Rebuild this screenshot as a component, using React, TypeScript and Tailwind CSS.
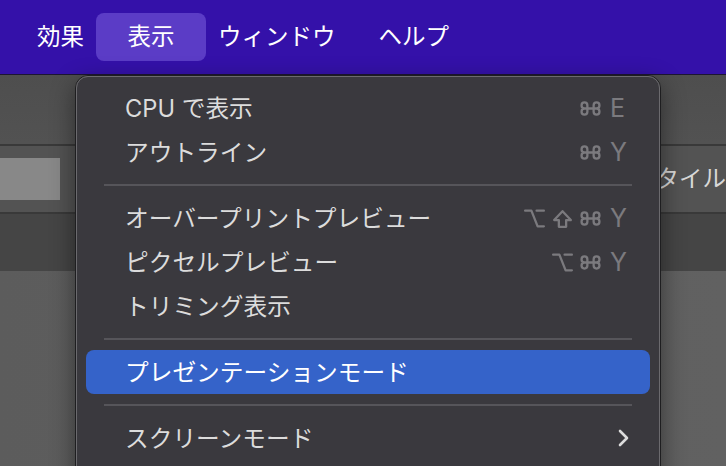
import React from "react";

const FONT = { fontFamily: 'Inter, "Noto Sans CJK JP", sans-serif' };

function Sym({ k }: { k: string }) {
  const common = {
    width: 25,
    height: 25,
    viewBox: "0 0 24 24",
    fill: "none",
    stroke: "#7b7a7e",
    strokeWidth: 2.2,
    strokeLinecap: "round" as const,
    strokeLinejoin: "round" as const,
  };
  if (k === "cmd")
    return (
      <svg {...common}>
        <path d="M15 9v6a2.8 2.8 0 1 0 2.8-2.8H6.2A2.8 2.8 0 1 0 9 15V9a2.8 2.8 0 1 0-2.8 2.8h11.6A2.8 2.8 0 1 0 15 9z" />
      </svg>
    );
  if (k === "opt")
    return (
      <svg {...common}>
        <path d="M3 4.5h6l6 15h6" />
        <path d="M14 4.5h7" />
      </svg>
    );
  if (k === "shift")
    return (
      <svg {...common}>
        <path d="M8.5 20v-6.5H4L12 5l8 8.5h-4.5V20h-7z" />
      </svg>
    );
  return (
    <span className="text-[25px] leading-none w-[16px] ml-[3px] text-left text-[#7b7a7e] pl-[1px]" style={FONT}>
      {k}
    </span>
  );
}

function Shortcut({ keys }: { keys: string[] }) {
  return (
    <div className="flex items-center gap-[3px]">
      {keys.map((k, i) => (
        <Sym key={i} k={k} />
      ))}
    </div>
  );
}

function Row({ label, keys, active, sub }: { label: string; keys?: string[]; active?: boolean; sub?: boolean }) {
  return (
    <div
      className={
        "h-[44px] flex items-center justify-between pl-[39px] pr-[25px] rounded-[8px] " +
        (active ? "bg-[#3563c9] text-white" : "text-[#dcdcdc]")
      }
    >
      <span className="text-[23.7px] leading-none whitespace-nowrap translate-y-[1px]" style={FONT}>
        {label}
      </span>
      {keys && <Shortcut keys={keys} />}
      {sub && (
        <svg width="12" height="18" viewBox="0 0 12 18" className="mr-[-4px]">
          <polyline points="3,2 10,9 3,16" fill="none" stroke="#dcdcdc" strokeWidth="2.6" strokeLinecap="round" strokeLinejoin="round" />
        </svg>
      )}
    </div>
  );
}

function Sep() {
  return (
    <div className="h-[22px] flex items-center px-[18px]">
      <div className="h-[2px] w-full bg-[#56555a]" />
    </div>
  );
}

export default function App() {
  return (
    <div className="relative w-[726px] h-[466px] overflow-hidden bg-[#5e5e5e]" style={FONT}>
      {/* menu bar */}
      <div className="h-[75px] bg-[#3411a9] border-b border-[#1d1633] flex items-center pl-[26px] text-white text-[23.5px] leading-none">
        <div className="px-[11px] h-[48px] flex items-center">効果</div>
        <div className="w-[110px] h-[48px] flex items-center justify-center rounded-[8px] bg-[#5b3cc6] ml-[1px]">表示</div>
        <div className="pl-[12px] pr-[43px] h-[48px] flex items-center">ウィンドウ</div>
        <div className="h-[48px] flex items-center">ヘルプ</div>
      </div>

      {/* background app */}
      <div className="flex flex-col">
        <div className="h-[69px] bg-gradient-to-b from-[#4e4e4e] to-[#525252]" />
        <div className="h-[2px] bg-[#393939]" />
        <div className="h-[66px] bg-[#535353] flex items-center">
          <div className="w-[60px] h-[42px] bg-[#888888]" />
          <div className="w-[596px]" />
          <span className="text-[23.5px] leading-none text-[#d8d8d8] whitespace-nowrap">タイル</span>
        </div>
        <div className="h-[2px] bg-[#393939]" />
        <div className="h-[57px] bg-[#454545]" />
        <div className="h-[200px] bg-gradient-to-r from-[#5c5c5c] to-[#616161]" />
      </div>

      {/* dropdown menu */}
      <div className="absolute left-[75px] top-[75px] w-[586px] h-[420px] rounded-t-[13px] border border-[#1e1e20] shadow-[0_8px_24px_rgba(0,0,0,0.45)]">
        <div className="w-full h-full rounded-t-[12px] border border-[#6b6a6e] bg-[#3a393e] px-[9px] pt-[9px]">
          <Row label="CPU で表示" keys={["cmd", "E"]} />
          <Row label="アウトライン" keys={["cmd", "Y"]} />
          <Sep />
          <Row label="オーバープリントプレビュー" keys={["opt", "shift", "cmd", "Y"]} />
          <Row label="ピクセルプレビュー" keys={["opt", "cmd", "Y"]} />
          <Row label="トリミング表示" />
          <Sep />
          <Row label="プレゼンテーションモード" active />
          <Sep />
          <Row label="スクリーンモード" sub />
        </div>
      </div>
    </div>
  );
}
